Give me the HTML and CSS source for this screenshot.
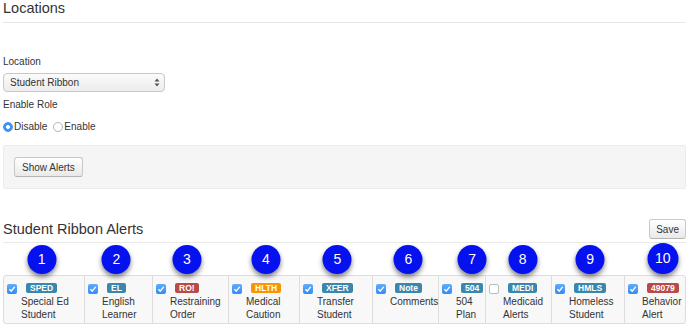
FILE: index.html
```html
<!DOCTYPE html>
<html lang="en">
<head>
    <meta charset="UTF-8">
    <meta name="viewport" content="width=device-width, initial-scale=1.0">
    <title>Locations</title>
    <link rel="stylesheet" href="styles.css">
</head>
<body>
    <div class="page">
        <h3 class="page-title">Locations</h3>

        <div class="location-form">
            <div class="field-label">Location</div>
            <div class="select-box">
                <span>Student Ribbon</span>
                <svg class="select-arrows" width="6" height="9" viewBox="0 0 6 9">
                    <path d="M3 0.5 L5.5 3.5 L0.5 3.5 Z" fill="#555"/>
                    <path d="M3 8.5 L5.5 5.5 L0.5 5.5 Z" fill="#555"/>
                </svg>
            </div>

            <div class="field-label role-label">Enable Role</div>
            <div class="radio-row">
                <span class="radio checked"></span>
                <span class="radio-text">Disable</span>
                <span class="radio"></span>
                <span class="radio-text">Enable</span>
            </div>
        </div>

        <div class="well">
            <button type="button" class="btn">Show Alerts</button>
        </div>

        <div class="section-head">
            <h4>Student Ribbon Alerts</h4>
            <button type="button" class="btn">Save</button>
        </div>

        <!-- one cell per ribbon alert, numbered markers sit over the tags -->
        <div class="alerts">
            <div class="alert-cell">
                <span class="check on"><svg viewBox="0 0 10 10"><path d="M2.4 5.2 L4.2 7.1 L7.7 2.9"/></svg></span>
                <div class="alert-label">
                    <div class="tag-row"><span class="tag blue">SPED<span class="marker">1</span></span></div>
                    Special Ed<br>Student
                </div>
            </div>
            <div class="alert-cell">
                <span class="check on"><svg viewBox="0 0 10 10"><path d="M2.4 5.2 L4.2 7.1 L7.7 2.9"/></svg></span>
                <div class="alert-label">
                    <div class="tag-row"><span class="tag blue">EL<span class="marker">2</span></span></div>
                    English<br>Learner
                </div>
            </div>
            <div class="alert-cell">
                <span class="check on"><svg viewBox="0 0 10 10"><path d="M2.4 5.2 L4.2 7.1 L7.7 2.9"/></svg></span>
                <div class="alert-label">
                    <div class="tag-row"><span class="tag red">RO!<span class="marker">3</span></span></div>
                    Restraining<br>Order
                </div>
            </div>
            <div class="alert-cell">
                <span class="check on"><svg viewBox="0 0 10 10"><path d="M2.4 5.2 L4.2 7.1 L7.7 2.9"/></svg></span>
                <div class="alert-label">
                    <div class="tag-row"><span class="tag orange">HLTH<span class="marker">4</span></span></div>
                    Medical<br>Caution
                </div>
            </div>
            <div class="alert-cell">
                <span class="check on"><svg viewBox="0 0 10 10"><path d="M2.4 5.2 L4.2 7.1 L7.7 2.9"/></svg></span>
                <div class="alert-label">
                    <div class="tag-row"><span class="tag blue">XFER<span class="marker">5</span></span></div>
                    Transfer<br>Student
                </div>
            </div>
            <div class="alert-cell">
                <span class="check on"><svg viewBox="0 0 10 10"><path d="M2.4 5.2 L4.2 7.1 L7.7 2.9"/></svg></span>
                <div class="alert-label">
                    <div class="tag-row"><span class="tag blue">Note<span class="marker">6</span></span></div>
                    Comments
                </div>
            </div>
            <div class="alert-cell">
                <span class="check on"><svg viewBox="0 0 10 10"><path d="M2.4 5.2 L4.2 7.1 L7.7 2.9"/></svg></span>
                <div class="alert-label">
                    <div class="tag-row"><span class="tag blue">504<span class="marker">7</span></span></div>
                    504<br>Plan
                </div>
            </div>
            <div class="alert-cell">
                <span class="check"></span>
                <div class="alert-label">
                    <div class="tag-row"><span class="tag blue">MEDI<span class="marker">8</span></span></div>
                    Medicaid<br>Alerts
                </div>
            </div>
            <div class="alert-cell">
                <span class="check on"><svg viewBox="0 0 10 10"><path d="M2.4 5.2 L4.2 7.1 L7.7 2.9"/></svg></span>
                <div class="alert-label">
                    <div class="tag-row"><span class="tag blue">HMLS<span class="marker">9</span></span></div>
                    Homeless<br>Student
                </div>
            </div>
            <div class="alert-cell">
                <span class="check on"><svg viewBox="0 0 10 10"><path d="M2.4 5.2 L4.2 7.1 L7.7 2.9"/></svg></span>
                <div class="alert-label">
                    <div class="tag-row"><span class="tag red">49079<span class="marker big">10</span></span></div>
                    Behavior<br>Alert
                </div>
            </div>
        </div>
    </div>
</body>
</html>
```

FILE: styles.css
```css
body {
    font-family: "Liberation Sans", Arial, sans-serif;
    font-size: 10px;
    line-height: 13px;
    color: #333;
    background-color: #fff;
    margin: 0;
    padding: 0;
}

.page {
    padding: 0 3px;
}

.page-title {
    font-size: 14.5px;
    line-height: 17px;
    font-weight: normal;
    margin: 0;
    padding-bottom: 5px;
    border-bottom: 1px solid #e8e8e8;
}

.location-form {
    padding-top: 32px;
}

.field-label {
    margin-bottom: 5px;
}

.role-label {
    margin-top: 6px;
    margin-bottom: 9px;
}

/* fake select, drawn so it looks like the mac control */
.select-box {
    width: 150px;
    height: 17px;
    padding: 0 4px 0 6px;
    border: 1px solid #c8c8c8;
    border-radius: 4px;
    background: linear-gradient(#fbfbfb, #ececec);
    display: flex;
    align-items: center;
    justify-content: space-between;
}

.radio-row {
    display: flex;
    align-items: center;
}

.radio {
    width: 10px;
    height: 10px;
    border: 1px solid #b5b5b5;
    border-radius: 50%;
    background: #fff;
    box-sizing: border-box;
}

.radio.checked {
    border-color: #3b8ff5;
    background: radial-gradient(circle, #fff 0 1.6px, #3d95f7 2.2px);
}

.radio-text {
    margin: 0 6px 0 1px;
}

.well {
    margin-top: 12px;
    padding: 11px 10px;
    background-color: #f5f5f5;
    border: 1px solid #ececec;
    border-radius: 2px;
}

.btn {
    font-family: inherit;
    font-size: 10px;
    color: #333;
    height: 20px;
    padding: 0 7px;
    background: linear-gradient(#fff, #e9e9e9);
    border: 1px solid #c9c9c9;
    border-bottom-color: #b3b3b3;
    border-radius: 3px;
    cursor: pointer;
}

.section-head {
    margin-top: 30px;
    padding-bottom: 3px;
    border-bottom: 1px solid #eaeaea;
    display: flex;
    justify-content: space-between;
    align-items: center;
}

.section-head h4 {
    font-size: 14.5px;
    line-height: 17px;
    font-weight: normal;
    margin: 0;
}

.section-head .btn {
    padding: 0 6px;
}

.alerts {
    margin-top: 32px;
    display: grid;
    grid-template-columns: 81px 68px 76px 71px 73px 66px 47px 66px 73px 60px;
    border: 1px solid #dddddd;
    border-radius: 3px;
    background-color: #f8f8f8;
}

.alert-cell {
    display: flex;
    align-items: flex-start;
    padding: 6px 2px 2px 3px;
    border-right: 1px solid #dddddd;
}

.alert-cell:last-child {
    border-right: none;
}

.check {
    flex: none;
    width: 10px;
    height: 10px;
    margin: 2px 4px 0 0;
    border: 1px solid #bdbdbd;
    border-radius: 2px;
    background: #fff;
    box-sizing: border-box;
}

.check.on {
    border: none;
    background: linear-gradient(#62acfa, #2f8cf3);
}

.check svg {
    display: block;
    width: 10px;
    height: 10px;
}

.check svg path {
    fill: none;
    stroke: #fff;
    stroke-width: 1.4;
}

.tag-row {
    height: 13px;
    padding-left: 5px;
}

.tag {
    position: relative;
    display: inline-block;
    margin-top: 1px;
    height: 10px;
    line-height: 10px;
    padding: 0 4px;
    font-size: 8.5px;
    font-weight: bold;
    color: #fff;
    border-radius: 2px;
    vertical-align: top;
}

.blue {
    background-color: #3a87ad;
}

.red {
    background-color: #b94a48;
}

.orange {
    background-color: #f89406;
}

/* numbered callouts laid over the screenshot */
.marker {
    position: absolute;
    left: 50%;
    bottom: 19px;
    transform: translateX(-50%);
    width: 29px;
    height: 29px;
    border-radius: 50%;
    background-color: #0511ee;
    color: #fff;
    font-size: 14px;
    font-weight: normal;
    line-height: 29px;
    text-align: center;
    box-shadow: 0 3px 5px rgba(0, 0, 0, 0.5);
}

.marker.big {
    width: 31px;
    height: 31px;
    line-height: 31px;
}
```
